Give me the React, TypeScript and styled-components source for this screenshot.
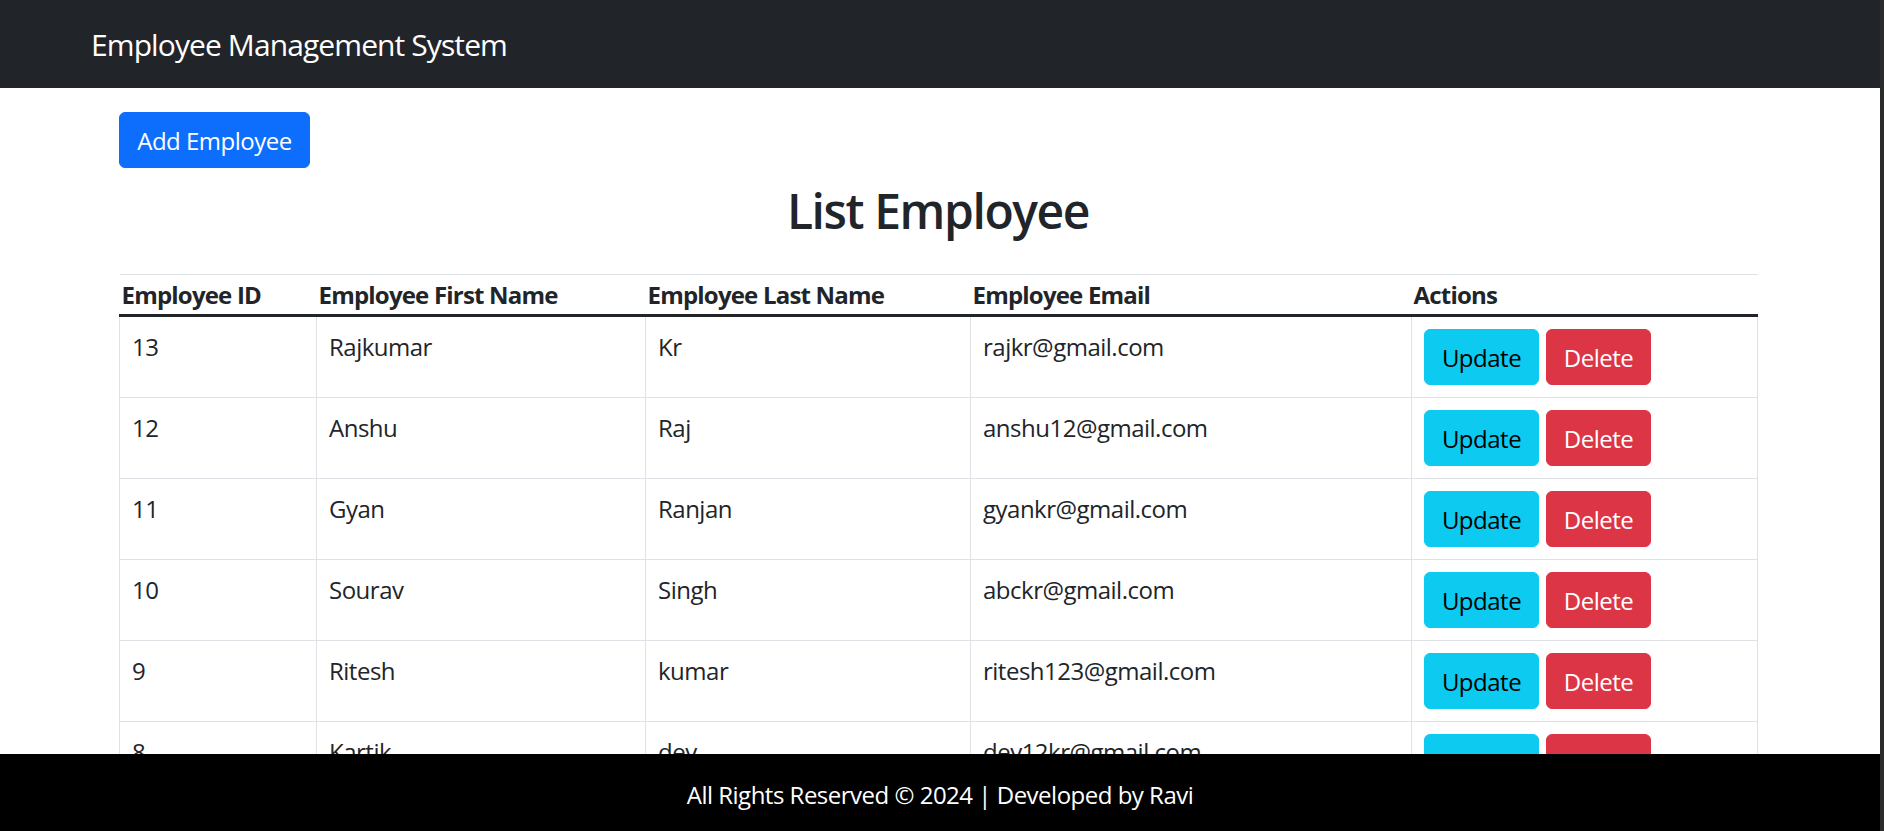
import styled, { createGlobalStyle } from "styled-components";

interface IEmployee {
  id: number;
  firstName: string;
  lastName: string;
  email: string;
}

const employees: IEmployee[] = [
  { id: 13, firstName: "Rajkumar", lastName: "Kr", email: "rajkr@gmail.com" },
  { id: 12, firstName: "Anshu", lastName: "Raj", email: "anshu12@gmail.com" },
  { id: 11, firstName: "Gyan", lastName: "Ranjan", email: "gyankr@gmail.com" },
  { id: 10, firstName: "Sourav", lastName: "Singh", email: "abckr@gmail.com" },
  { id: 9, firstName: "Ritesh", lastName: "kumar", email: "ritesh123@gmail.com" },
  { id: 8, firstName: "Kartik", lastName: "dev", email: "dev12kr@gmail.com" },
];

const columns = [
  { title: "Employee ID", width: 197 },
  { title: "Employee First Name", width: 329 },
  { title: "Employee Last Name", width: 325 },
  { title: "Employee Email", width: 441 },
  { title: "Actions", width: 346 },
];

export default function App() {
  return (
    <>
      <GlobalStyle />
      <Shell>
        <Page>
          <Navbar>
            <Brand>Employee Management System</Brand>
          </Navbar>

          <Main>
            <Container>
              <Button $variant="primary" $width={191}>
                Add Employee
              </Button>
              <Title>List Employee</Title>

              <Table>
                <colgroup>
                  {columns.map((c) => (
                    <col key={c.title} style={{ width: c.width }} />
                  ))}
                </colgroup>
                <thead>
                  <tr>
                    {columns.map((c) => (
                      <HeadCell key={c.title}>{c.title}</HeadCell>
                    ))}
                  </tr>
                </thead>
                <tbody>
                  {employees.map((e) => (
                    <tr key={e.id}>
                      <Cell>{e.id}</Cell>
                      <Cell>{e.firstName}</Cell>
                      <Cell>{e.lastName}</Cell>
                      <Cell>{e.email}</Cell>
                      <Cell>
                        <Actions>
                          <Button $variant="info" $width={115}>
                            Update
                          </Button>
                          <Button $variant="danger" $width={105}>
                            Delete
                          </Button>
                        </Actions>
                      </Cell>
                    </tr>
                  ))}
                </tbody>
              </Table>
            </Container>
          </Main>

          <Footer>All Rights Reserved © 2024 | Developed by Ravi</Footer>
        </Page>
        <ScrollTrack />
      </Shell>
    </>
  );
}

const GlobalStyle = createGlobalStyle`
  html, body {
    margin: 0;
    padding: 0;
    height: 100%;
  }

  body {
    font-family: "Open Sans", "Noto Sans", sans-serif;
    font-size: 24px;
    line-height: 1.5;
    color: #212529;
    background: #fff;
  }

  * {
    box-sizing: border-box;
  }
`;

const Shell = styled.div`
  display: flex;
  height: 100vh;
  overflow: hidden;
`;

const Page = styled.div`
  flex: 1;
  display: flex;
  flex-direction: column;
  min-width: 0;
`;

const ScrollTrack = styled.div`
  width: 4px;
  flex-shrink: 0;
  background: #2b2b2b;
`;

const Navbar = styled.nav`
  height: 88px;
  flex-shrink: 0;
  display: flex;
  align-items: center;
  padding-left: 91px;
  background: #212529;
`;

const Brand = styled.span`
  color: #fff;
  font-size: 30px;
  letter-spacing: -0.9px;
  line-height: 1.5;
`;

const Main = styled.main`
  flex: 1;
  overflow: hidden;
`;

const Container = styled.div`
  width: 1638px;
  margin-left: 119px;
  padding-top: 24px;
`;

const buttonColors = {
  primary: { bg: "#0d6efd", fg: "#fff" },
  info: { bg: "#0dcaf0", fg: "#000" },
  danger: { bg: "#dc3545", fg: "#fff" },
};

const Button = styled.button<{ $variant: keyof typeof buttonColors; $width: number }>`
  display: inline-flex;
  align-items: center;
  justify-content: center;
  width: ${(p) => p.$width}px;
  height: 56px;
  padding: 1px 0 0;
  border: 1px solid ${(p) => buttonColors[p.$variant].bg};
  border-radius: 6px;
  background: ${(p) => buttonColors[p.$variant].bg};
  color: ${(p) => buttonColors[p.$variant].fg};
  font-family: inherit;
  font-size: 24px;
  letter-spacing: -0.5px;
  line-height: 36px;
  cursor: pointer;
`;

const Title = styled.h2`
  margin: 14px 0 34px;
  text-align: center;
  font-size: 48px;
  font-weight: 600;
  letter-spacing: -1.4px;
  line-height: 58px;
`;

const Table = styled.table`
  width: 100%;
  table-layout: fixed;
  border-collapse: collapse;
  border-top: 1px solid #dee2e6;
`;

const HeadCell = styled.th`
  padding: 2px 2px 1px;
  text-align: left;
  font-weight: 700;
  font-size: 24px;
  letter-spacing: -0.8px;
  line-height: 36px;
  white-space: nowrap;
  border-bottom: 3px solid #212529;
`;

const Cell = styled.td`
  padding: 12px;
  vertical-align: top;
  font-size: 24px;
  letter-spacing: -0.5px;
  line-height: 36px;
  border: 1px solid #dee2e6;
  border-top: 0;
`;

const Actions = styled.div`
  display: flex;
  gap: 7px;
`;

const Footer = styled.footer`
  flex-shrink: 0;
  height: 77px;
  padding-top: 23px;
  background: #000;
  color: #fff;
  text-align: center;
  font-size: 24px;
  letter-spacing: -0.5px;
  line-height: 36px;
`;
